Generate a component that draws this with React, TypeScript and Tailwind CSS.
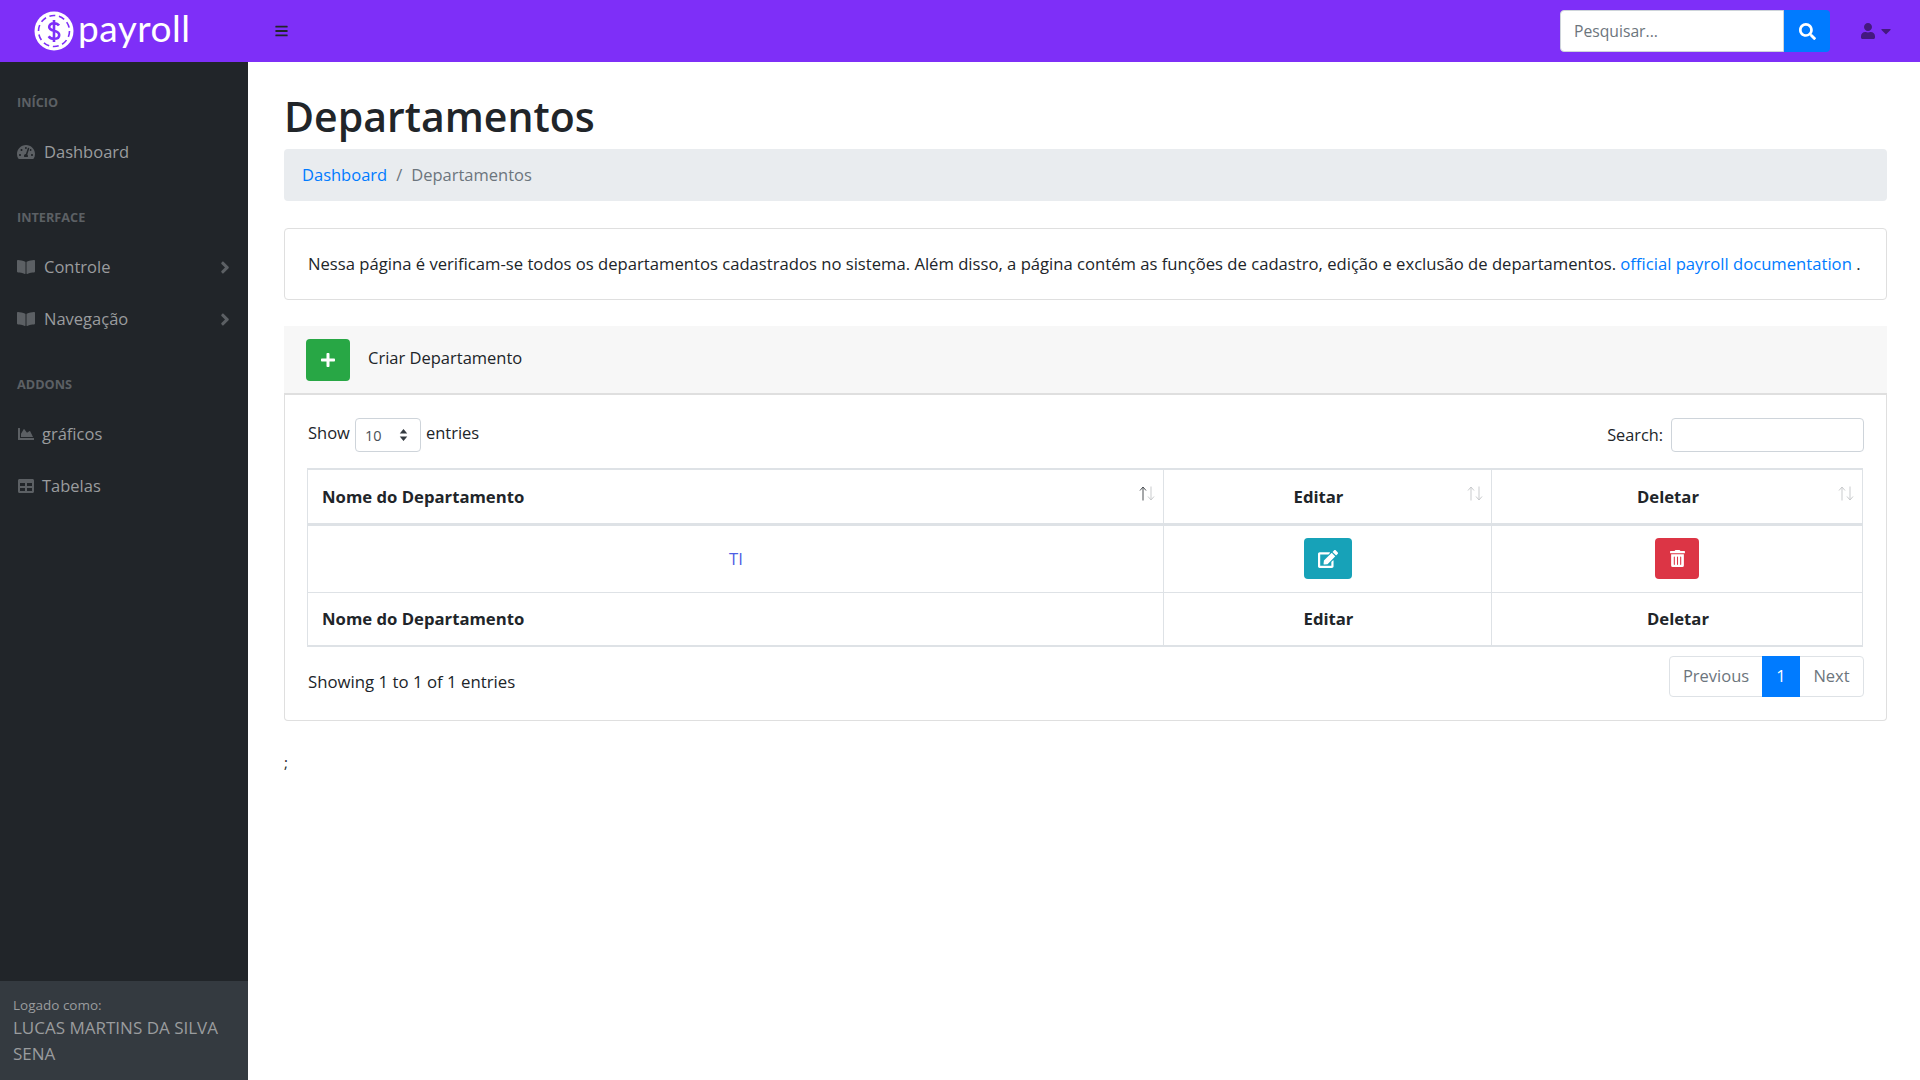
import {
  FaAngleRight,
  FaBars,
  FaBookOpen,
  FaCaretDown,
  FaChartArea,
  FaEdit,
  FaPlus,
  FaSearch,
  FaTable,
  FaTachometerAlt,
  FaTrashAlt,
  FaUser,
} from "react-icons/fa";

const menu = [
  {
    heading: "INÍCIO",
    items: [{ label: "Dashboard", icon: FaTachometerAlt, gap: "gap-[9px]", arrow: false }],
  },
  {
    heading: "INTERFACE",
    items: [
      { label: "Controle", icon: FaBookOpen, gap: "gap-[9px]", arrow: true },
      { label: "Navegação", icon: FaBookOpen, gap: "gap-[9px]", arrow: true },
    ],
  },
  {
    heading: "ADDONS",
    items: [
      { label: "gráficos", icon: FaChartArea, gap: "gap-[7px]", arrow: false },
      { label: "Tabelas", icon: FaTable, gap: "gap-[7px]", arrow: false },
    ],
  },
];

function Logo() {
  return (
    <svg viewBox="0 0 40 40" className="h-[40px] w-[40px]">
      <circle cx="20" cy="20" r="19.5" fill="#fff" />
      <circle cx="20" cy="20" r="15.5" fill="none" stroke="#7e2ff8" strokeWidth="1.6" strokeDasharray="6 3.7" />
      <path
        d="M25 14.5c-1-1.6-2.8-2.3-5-2.3-2.8 0-4.8 1.5-4.8 3.8 0 5 10 2.6 10 7.9 0 2.4-2.2 3.9-5.2 3.9-2.4 0-4.2-.9-5.3-2.6M20 9v22"
        fill="none"
        stroke="#7e2ff8"
        strokeWidth="2.6"
      />
    </svg>
  );
}

function SortArrows({ active = false }: { active?: boolean }) {
  return (
    <svg viewBox="0 0 16 15" className="absolute top-[16px] right-[8px] h-[15px] w-[16px] fill-none">
      <path d="M4 14.5V1M1 4.5 4 1l3 3.5" stroke={active ? "#4c5054" : "#c9cbcd"} />
      <path d="M12 .5V14M9 10.5l3 3.5 3-3.5" stroke="#c9cbcd" />
    </svg>
  );
}

export default function App() {
  return (
    <div className="flex h-screen flex-col overflow-hidden bg-white font-['Open_Sans',sans-serif] text-[16.5px] text-[#212529]">
      <nav className="flex h-[62px] shrink-0 items-center bg-[#7e2ff8] pr-[27px]">
        <div className="flex w-[275px] items-center pl-[34px]">
          <Logo />
          <span className="ml-[4px] -mt-[6px] font-['Lato',sans-serif] text-[37px] leading-10 tracking-[0.5px] text-white">
            payroll
          </span>
        </div>
        <FaBars className="h-[14px] w-[13px] text-[#212529]" />
        <div className="ml-auto flex h-[42px] w-[270px]">
          <input
            placeholder="Pesquisar..."
            className="h-full min-w-0 flex-1 rounded-l-[4px] border border-[#ced4da] bg-white px-[13px] text-[15.7px] placeholder:text-[#6c757d]"
          />
          <button className="flex w-[46px] items-center justify-center rounded-r-[4px] bg-[#007bff]">
            <FaSearch className="h-[17px] w-[17px] text-white" />
          </button>
        </div>
        <div className="ml-[30px] flex items-center gap-[3px] text-[#44197f]">
          <FaUser className="h-[16px] w-[16px]" />
          <FaCaretDown className="h-[16px] w-[14px]" />
        </div>
      </nav>

      <div className="flex min-h-0 flex-1">
        <aside className="flex w-[248px] shrink-0 flex-col justify-between bg-[#212529]">
          <div className="pt-px">
            {menu.map((section) => (
              <div key={section.heading}>
                <div className="pt-[30px] pb-[15px] pl-[17px] text-[12.7px] leading-[18px] font-bold text-[#5c6064]">
                  {section.heading}
                </div>
                {section.items.map(({ label, icon: Icon, gap, arrow }) => (
                  <div key={label} className={`flex h-[52px] items-center pr-[17px] pl-[17px] text-[#9a9c9e] ${gap}`}>
                    <Icon className="h-[16px] w-[18px] text-[#5c6064]" />
                    <span className="text-[16.5px]">{label}</span>
                    {arrow && <FaAngleRight className="ml-auto h-[19px] w-[12px] text-[#5c6064]" />}
                  </div>
                ))}
              </div>
            ))}
          </div>
          <div className="h-[99px] bg-[#343a40] px-[13px] pt-[14px] text-[#9a9c9e]">
            <div className="text-[13.5px] leading-[20px]">Logado como:</div>
            <div className="text-[17px] leading-[26px]">LUCAS MARTINS DA SILVA SENA</div>
          </div>
        </aside>

        <main className="min-w-0 flex-1 pt-[30px] pr-[33px] pl-[36px]">
          <h1 className="text-[41px] leading-[48px] font-semibold">Departamentos</h1>
          <div className="mt-[9px] flex h-[52px] items-center gap-[9px] rounded-[4px] bg-[#e9ecef] px-[18px]">
            <span className="text-[#007bff]">Dashboard</span>
            <span className="text-[#6c757d]">/</span>
            <span className="text-[#6c757d]">Departamentos</span>
          </div>

          <div className="mt-[27px] flex h-[72px] items-center rounded-[4px] border border-[#dfdfdf] px-[23px]">
            <p className="whitespace-nowrap text-[16.65px]">
              Nessa página é verificam-se todos os departamentos cadastrados no sistema. Além disso, a página contém as
              funções de cadastro, edição e exclusão de departamentos.{" "}
              <span className="text-[#007bff]">official payroll documentation</span> .
            </p>
          </div>

          <div className="mt-[26px] flex h-[69px] items-center border-b-2 border-[#dfdfdf] bg-[#f7f7f7] pl-[22px]">
            <button className="mt-[1px] flex h-[42px] w-[44px] items-center justify-center rounded-[4px] bg-[#28a745]">
              <FaPlus className="h-[16px] w-[14px] text-white" />
            </button>
            <span className="ml-[18px] -mt-[3px]">Criar Departamento</span>
          </div>

          <div className="h-[326px] rounded-b-[4px] border border-t-0 border-[#dfdfdf] pt-[23px] pr-[22px] pl-[23px]">
            <div className="flex h-[34px] items-center justify-between">
              <div className="flex items-center gap-[5px]">
                <span className="-mt-[4px]">Show</span>
                <div className="flex h-[34px] w-[66px] items-center justify-between rounded-[4px] border border-[#ced4da] pr-[12px] pl-[9px] text-[14.5px] text-[#495057]">
                  <span className="mt-[2px]">10</span>
                  <svg viewBox="0 0 10 16" className="h-[12px] w-[9px] fill-[#343a40]">
                    <path d="M5 0 10 6H0zM5 16 0 10H10z" />
                  </svg>
                </div>
                <span className="-mt-[4px]">entries</span>
              </div>
              <div className="flex items-center gap-[8px]">
                <span className="text-[16.3px]">Search:</span>
                <input className="h-[34px] w-[193px] rounded-[4px] border border-[#ced4da]" />
              </div>
            </div>

            <table className="mt-[16px] -ml-px w-[1555px] table-fixed border-collapse text-[16.7px]">
              <colgroup>
                <col className="w-[856px]" />
                <col className="w-[328px]" />
                <col className="w-[371px]" />
              </colgroup>
              <thead>
                <tr className="h-[55px]">
                  <th className="relative border border-t-2 border-b-[3px] border-[#dee2e6] pl-[14px] text-left font-bold">
                    Nome do Departamento
                    <SortArrows active />
                  </th>
                  <th className="relative border border-t-2 border-b-[3px] border-[#dee2e6] pr-[18px] text-center font-bold">
                    Editar
                    <SortArrows />
                  </th>
                  <th className="relative border border-t-2 border-b-[3px] border-[#dee2e6] pr-[18px] text-center font-bold">
                    Deletar
                    <SortArrows />
                  </th>
                </tr>
              </thead>
              <tbody>
                <tr className="h-[68px]">
                  <td className="border border-[#dee2e6] pl-px text-center text-[#4e5ee4]">TI</td>
                  <td className="border border-[#dee2e6]">
                    <button className="mx-auto flex h-[41px] w-[48px] items-center justify-center rounded-[4px] bg-[#17a2b8]">
                      <FaEdit className="h-[18px] w-[20px] text-white" />
                    </button>
                  </td>
                  <td className="border border-[#dee2e6]">
                    <button className="mx-auto flex h-[41px] w-[44px] items-center justify-center rounded-[4px] bg-[#dc3545]">
                      <FaTrashAlt className="h-[17px] w-[15px] text-white" />
                    </button>
                  </td>
                </tr>
              </tbody>
              <tfoot>
                <tr className="h-[54px]">
                  <th className="border border-b-2 border-[#dee2e6] pl-[14px] text-left font-bold">Nome do Departamento</th>
                  <th className="border border-b-2 border-[#dee2e6] pl-[2px] text-center font-bold">Editar</th>
                  <th className="border border-b-2 border-[#dee2e6] pl-[2px] text-center font-bold">Deletar</th>
                </tr>
              </tfoot>
            </table>

            <div className="mt-[9px] flex items-start justify-between">
              <span className="mt-[13px] text-[16.8px]">Showing 1 to 1 of 1 entries</span>
              <div className="flex h-[41px] rounded-[4px] border border-[#dee2e6] text-[#6c757d]">
                <span className="flex w-[92px] items-center justify-center">Previous</span>
                <span className="-my-px flex w-[38px] items-center justify-center bg-[#007bff] text-white">1</span>
                <span className="flex w-[63px] items-center justify-center">Next</span>
              </div>
            </div>
          </div>

          <p className="mt-[30px] text-[15px]">;</p>
        </main>
      </div>
    </div>
  );
}
